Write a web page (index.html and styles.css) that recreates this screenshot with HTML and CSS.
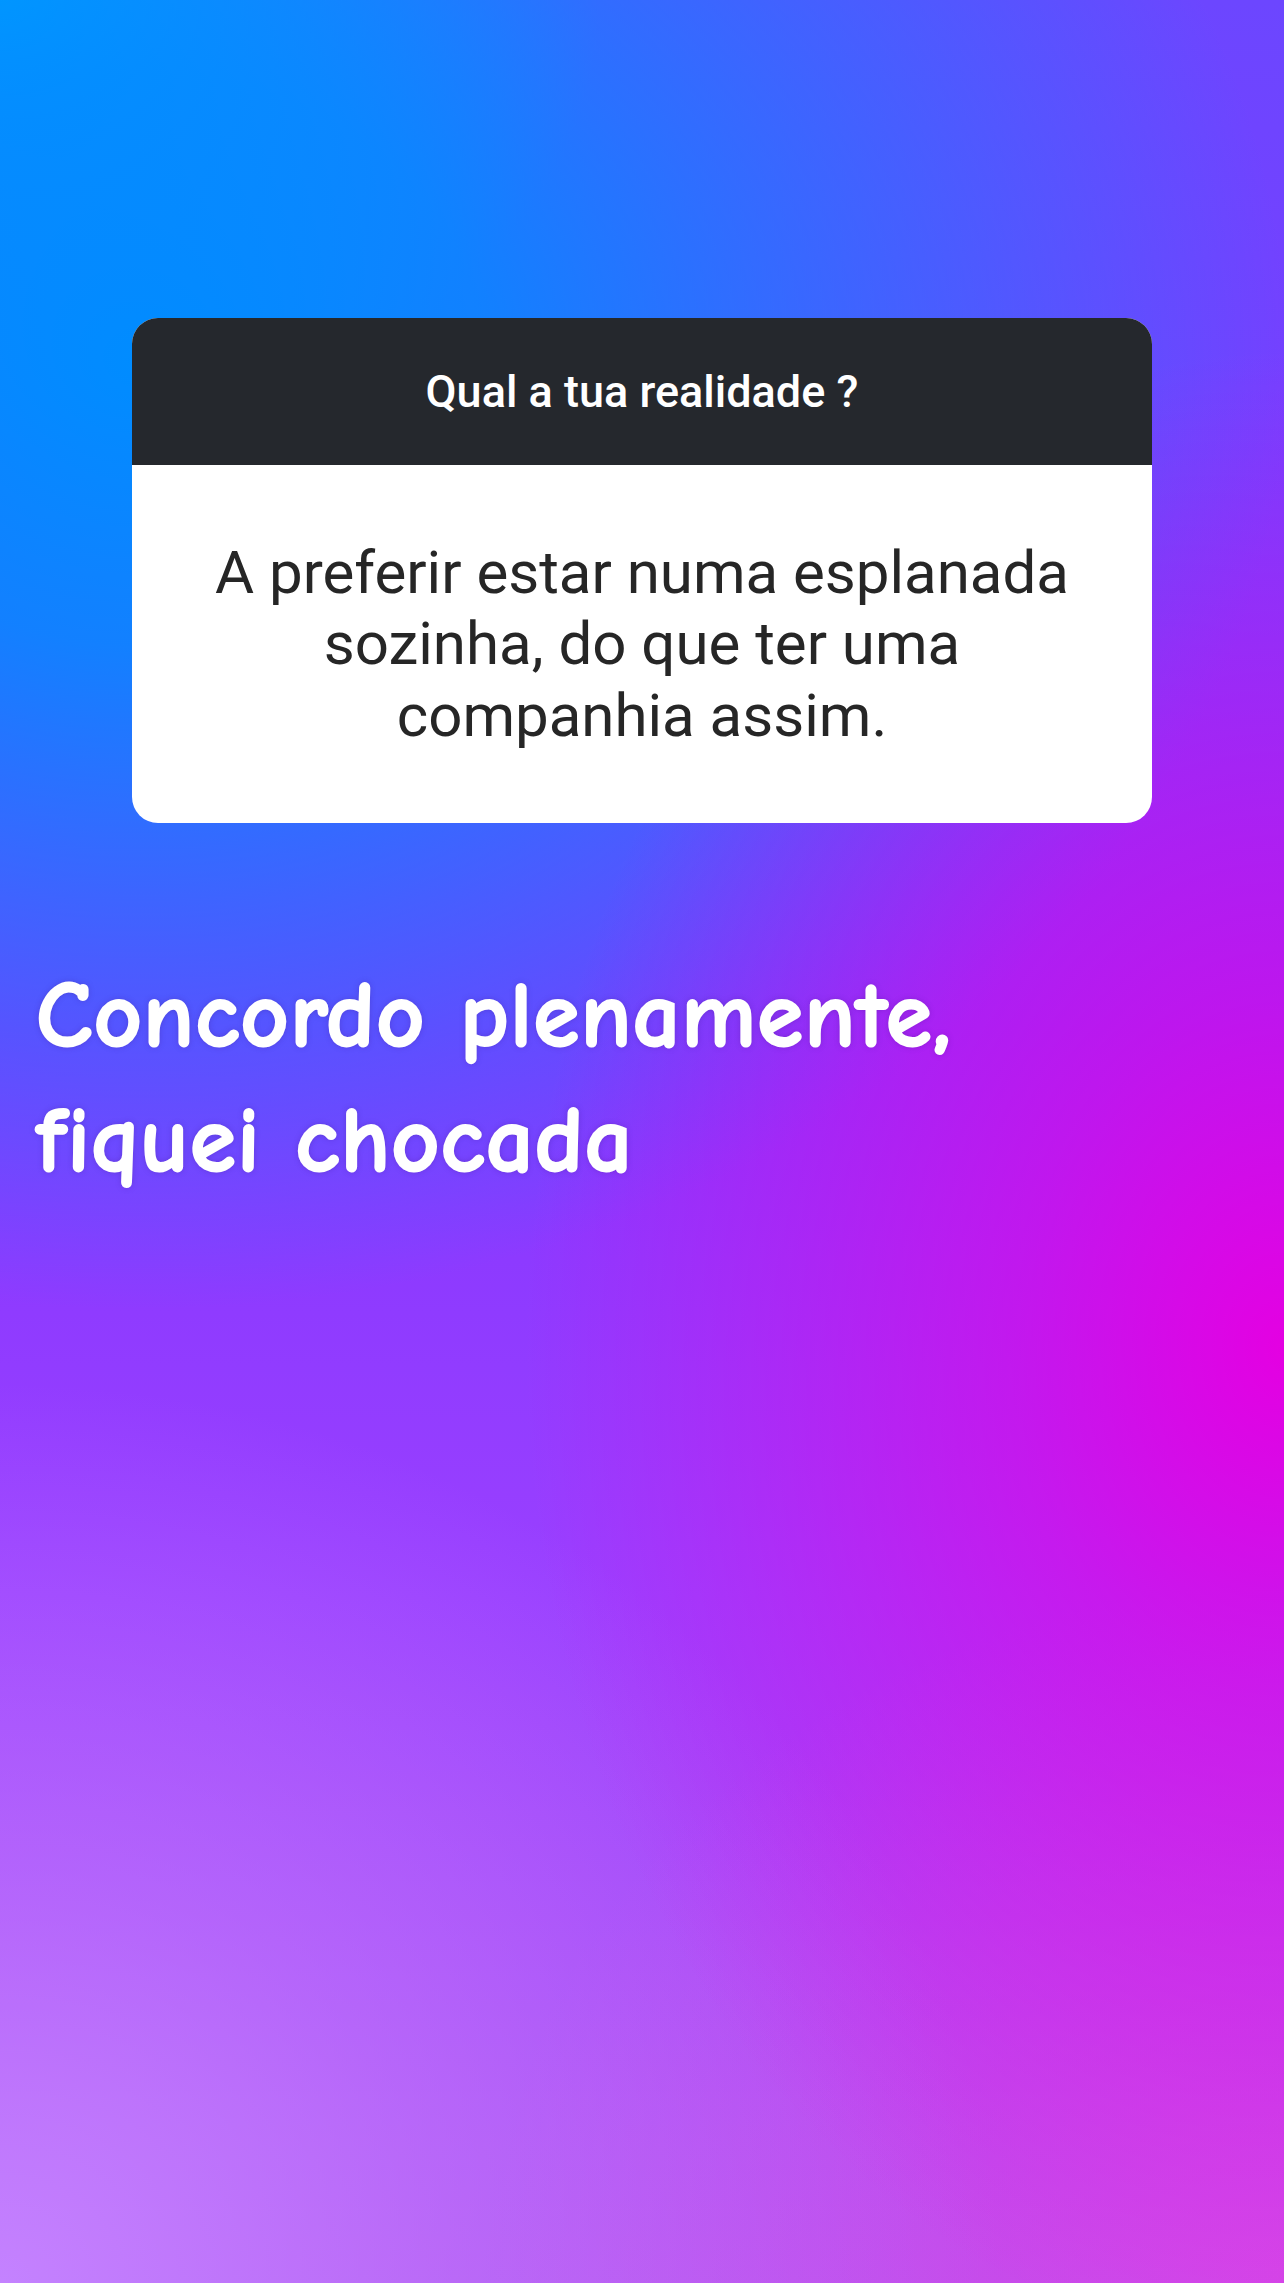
FILE: index.html
```html
<!DOCTYPE html>
<html lang="pt">
<head>
<meta charset="utf-8">
<title>Qual a tua realidade ?</title>
<link rel="stylesheet" href="styles.css">
</head>
<body>
<main class="story">
  <section class="question-card">
    <header class="question-head">Qual a tua realidade ?</header>
    <div class="question-answer">A preferir estar numa esplanada<br>sozinha, do que ter uma<br>companhia assim.</div>
  </section>
  <p class="caption">Concordo plenamente,<br>fiquei chocada</p>
</main>
</body>
</html>
```

FILE: styles.css
```css
html, body {
  margin: 0;
  padding: 0;
}
body {
  width: 1284px;
  min-height: 2283px;
  background:
    radial-gradient(ellipse 760px 1000px at 1284px 1350px, rgba(228,0,226,1) 0%, rgba(228,0,226,0.6) 35%, rgba(228,0,226,0) 100%),
    radial-gradient(ellipse 1000px 900px at 0px 2283px, rgba(196,130,255,1) 0%, rgba(196,130,255,0.5) 45%, rgba(196,130,255,0) 100%),
    radial-gradient(ellipse 800px 700px at 1284px 2283px, rgba(212,72,232,1) 0%, rgba(212,72,232,0) 100%),
    radial-gradient(ellipse 1150px 950px at 140px 360px, rgba(0,140,255,1) 0%, rgba(0,140,255,0.85) 30%, rgba(0,140,255,0) 100%),
    radial-gradient(ellipse 600px 450px at 0px 0px, rgba(0,175,255,1) 0%, rgba(0,175,255,0) 100%),
    linear-gradient(180deg, #6c46ff 0%, #8436ff 45%, #9a40ff 70%, #b050f0 100%);
  font-family: Roboto, "Liberation Sans", Arial, sans-serif;
}
.story {
  display: flex;
  flex-direction: column;
  padding-top: 318px;
}
.question-card {
  margin: 0 132px;
  width: 1020px;
  border-radius: 26px;
  overflow: hidden;
  background: #ffffff;
}
.question-head {
  height: 147px;
  display: flex;
  align-items: center;
  justify-content: center;
  background: #25282d;
  color: #ffffff;
  font-size: 45px;
  font-weight: 500;
}
.question-answer {
  height: 358px;
  display: flex;
  align-items: center;
  justify-content: center;
  text-align: center;
  color: #262626;
  font-size: 60px;
  line-height: 71.5px;
}
.caption {
  margin: 130px 0 0 36px;
  color: #ffffff;
  font-family: "Comic Sans MS", "Comic Neue", Roboto, sans-serif;
  font-weight: 700;
  font-size: 94px;
  line-height: 125px;
  letter-spacing: 1px;
  -webkit-text-stroke: 2px #ffffff;
  text-shadow: 0 0 6px rgba(60, 20, 120, 0.35);
}
```
